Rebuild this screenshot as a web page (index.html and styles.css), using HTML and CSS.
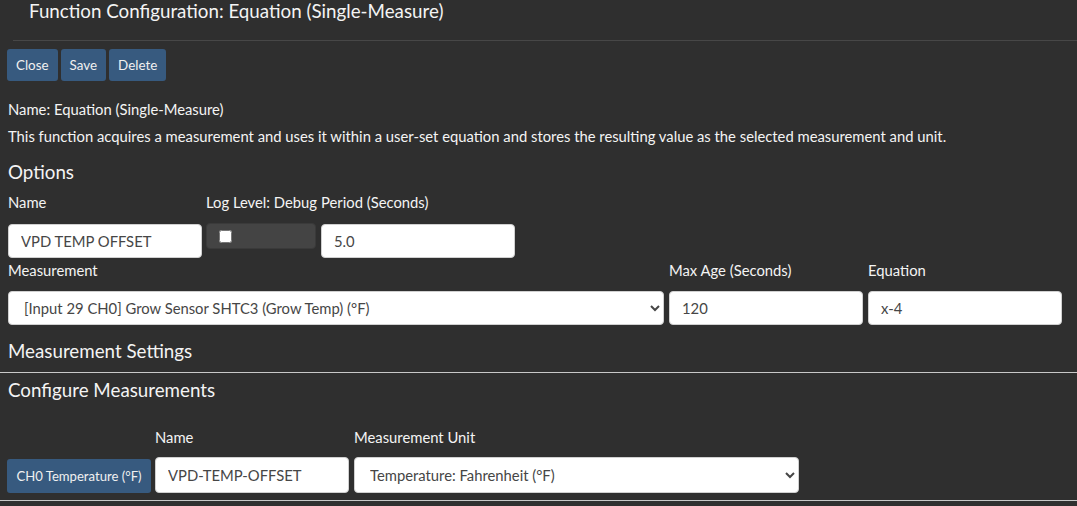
FILE: index.html
```html
<!DOCTYPE html>
<html>
<head>
<meta charset="utf-8">
<link rel="stylesheet" href="styles.css">
</head>
<body>
<div class="page">
  <div class="title">Function Configuration: Equation (Single-Measure)</div>
  <div class="title-rule"></div>
  <div class="btns">
    <button class="btn">Close</button>
    <button class="btn">Save</button>
    <button class="btn">Delete</button>
  </div>
  <p class="name-line">Name: Equation (Single-Measure)</p>
  <p class="desc">This function acquires a measurement and uses it within a user-set equation and stores the resulting value as the selected measurement and unit.</p>
  <h5 class="h-options">Options</h5>
  <div class="row row1">
    <div class="field w194">
      <label>Name</label>
      <input class="ctl" type="text" value="VPD TEMP OFFSET">
    </div>
    <div class="field w110">
      <label>Log Level: Debug</label>
      <div class="chkbox"><input type="checkbox"></div>
    </div>
    <div class="field w194">
      <label>Period (Seconds)</label>
      <input class="ctl" type="text" value="5.0">
    </div>
  </div>
  <div class="row row2">
    <div class="field w656">
      <label>Measurement</label>
      <select class="ctl sel"><option>[Input 29 CH0] Grow Sensor SHTC3 (Grow Temp) (°F)</option></select>
    </div>
    <div class="field w194">
      <label>Max Age (Seconds)</label>
      <input class="ctl" type="text" value="120">
    </div>
    <div class="field w194">
      <label>Equation</label>
      <input class="ctl" type="text" value="x-4">
    </div>
  </div>
  <h5 class="h-ms">Measurement Settings</h5>
</div>
<div class="rule"></div>
<div class="page">
  <h5 class="h-cm">Configure Measurements</h5>
  <div class="row row3">
    <div class="field w144 btnfield">
      <label>&nbsp;</label>
      <button class="btn btn-ch">CH0 Temperature (°F)</button>
    </div>
    <div class="field w194">
      <label>Name</label>
      <input class="ctl tall" type="text" value="VPD-TEMP-OFFSET">
    </div>
    <div class="field w445">
      <label>Measurement Unit</label>
      <select class="ctl sel tall"><option>Temperature: Fahrenheit (°F)</option></select>
    </div>
  </div>
</div>
<div class="rule"></div>
</body>
</html>
```

FILE: styles.css
```css
html, body {
  margin: 0;
  padding: 0;
  background: #2f2f2f;
  color: #f4f4f4;
  font-family: Lato, "Open Sans", sans-serif;
  font-size: 14.8px;
}
.page {
  padding: 0 0 0 8px;
}
.title {
  font-size: 18.75px;
  line-height: 24px;
  padding: 0 0 0 21px;
  margin: -1px 0 0 0;
  height: 41px;
  box-sizing: border-box;
}
.title-rule {
  height: 1px;
  background: #474747;
  margin: 0 0 0 5px;
}
.btns {
  display: flex;
  gap: 3px;
  margin: 8px 0 0 -1px;
}
.btn {
  background: #375a7f;
  color: #f0f0f0;
  border: none;
  border-radius: 3px;
  font-family: Lato, "Open Sans", sans-serif;
  font-size: 13.4px;
  height: 32px;
  padding: 0 9px;
}
.name-line {
  margin: 19px 0 0 0;
  line-height: 18px;
}
.desc {
  margin: 9px 0 0 0;
  line-height: 18px;
}
h5 {
  font-weight: normal;
  font-size: 18.75px;
  line-height: 22.5px;
  margin: 0;
}
.h-options {
  margin-top: 16px;
}
.row {
  display: flex;
  align-items: flex-start;
}
.row1 { gap: 4px; margin-top: 9px; }
.row1 .w194:last-child { margin-left: 1px; }
.row2 { gap: 5px; margin-top: 3px; }
.row3 { gap: 3px; margin-top: 26px; }
.row3 .w445 { margin-left: 2px; }
.field {
  display: flex;
  flex-direction: column;
}
.field label {
  line-height: 18px;
  height: 18px;
  margin-bottom: 13px;
  white-space: nowrap;
}
.row2 .field label { margin-bottom: 12px; }
.row3 .field label { margin-bottom: 11px; }
.w110 { width: 110px; }
.w144 { width: 144px; }
.w194 { width: 194px; }
.w445 { width: 445px; }
.w656 { width: 656px; }
.ctl {
  box-sizing: border-box;
  height: 34px;
  width: 100%;
  background: #fff;
  border: 1px solid #d0d0d0;
  border-radius: 4px;
  font-family: Lato, "Open Sans", sans-serif;
  font-size: 14.8px;
  color: #464646;
  padding: 0 12px;
  margin: 0;
}
.sel {
  padding: 0 11px;
}
.chkbox {
  box-sizing: border-box;
  height: 26px;
  margin-top: -1px;
  background: #444;
  border: 1px solid #3a3a3a;
  border-radius: 4px;
  display: flex;
  align-items: flex-start;
}
.chkbox input {
  margin: 6px 0 0 12px;
  width: 13px;
  height: 13px;
}
.h-ms {
  margin-top: 15px;
  margin-bottom: 9.5px;
}
.rule {
  height: 1px;
  background: #c8c8c8;
}
.h-cm {
  margin-top: 6.5px;
}
.tall {
  height: 36px;
  margin-bottom: 7px;
}
.btnfield .btn-ch {
  margin: 2px 0 0 -1px;
  height: 34px;
  width: 144px;
  padding: 0;
  font-size: 13.125px;
}
```
